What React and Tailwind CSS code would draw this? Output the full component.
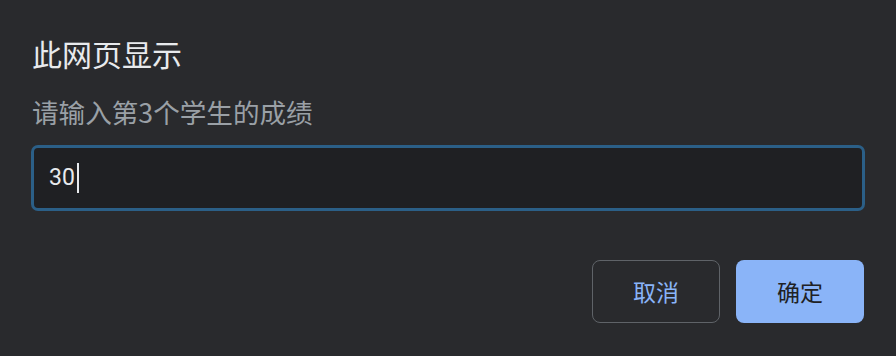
export default function App() {
  return (
    <div
      className="w-[896px] h-[356px] bg-[#292a2d] px-[32px] pt-[35px]"
      style={{ fontFamily: '"Noto Sans CJK SC", "Noto Sans", sans-serif' }}
    >
      <h1 className="text-[30px] leading-[36px] font-normal text-[#e8eaed]">此网页显示</h1>
      <p className="mt-[26px] text-[26.6px] leading-[30px] text-[#9aa0a6]">请输入第3个学生的成绩</p>
      <div className="mt-[18px] h-[66px] w-[834px] -ml-px rounded-[7px] border-[3px] border-[#2b5f87] bg-[#1f2023] flex items-center pl-[15px]">
        <span className="text-[23px] text-[#e8eaed]" style={{ fontFamily: 'Roboto, "Noto Sans", sans-serif' }}>30</span>
        <span className="ml-[2px] w-[2px] h-[30px] bg-[#e8eaed]" />
      </div>
      <div className="mt-[49px] flex justify-end gap-[16px]">
        <button className="w-[128px] h-[63px] rounded-[8px] border border-[#5f6368] text-[23px] text-[#8ab4f8]">
          取消
        </button>
        <button className="w-[128px] h-[63px] rounded-[8px] bg-[#8ab4f8] text-[23px] text-[#202124]">
          确定
        </button>
      </div>
    </div>
  )
}
